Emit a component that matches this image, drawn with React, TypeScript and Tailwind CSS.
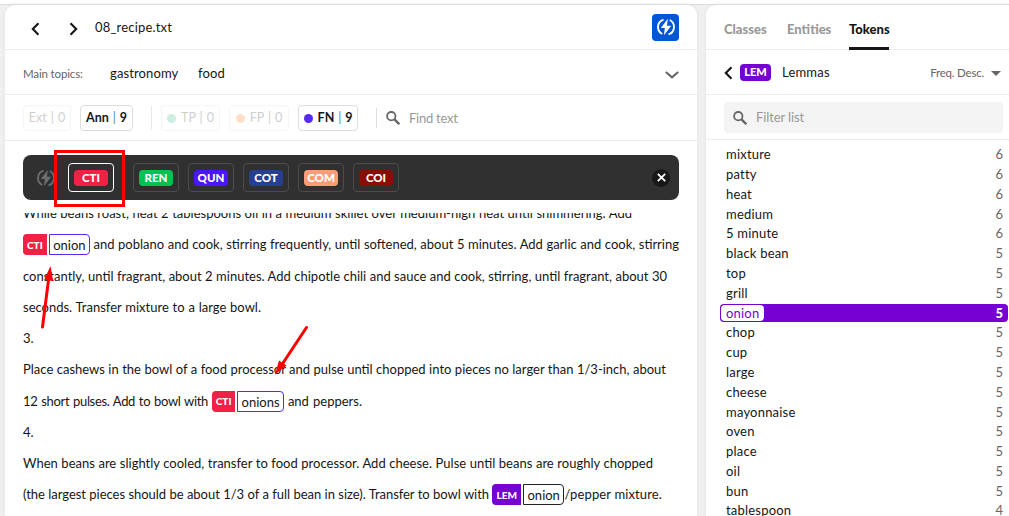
import type { ReactNode } from 'react';

const Search = ({ className }: { className: string }) => (
  <svg viewBox="0 0 14 14" className={className} fill="none" stroke="#666">
    <circle cx="5.3" cy="5.2" r="4.2" strokeWidth="1.8" />
    <path d="M8.5 8.4L13.3 13.2" strokeWidth="2.3" />
  </svg>
);

const Chevron = ({ d, className }: { d: string; className: string }) => (
  <svg viewBox="0 0 14 14" className={className} fill="none" strokeWidth="2.1">
    <path d={d} />
  </svg>
);

const Bolt = ({ className }: { className: string }) => (
  <svg viewBox="0 0 18 18" className={className} fill="none" stroke="currentColor">
    <path d="M6.500 1.600A7.800 7.800 0 0 0 5.300 16" strokeWidth="1.9" />
    <path d="M11.500 16.400A7.800 7.800 0 0 0 12.700 2" strokeWidth="1.9" />
    <path d="M10.800.8L3.800 10h4L7 17.200l7.200-9.400h-4.200z" fill="currentColor" stroke="none" />
  </svg>
);

function Chip({ label, count, dot, active, className }: { label: string; count: number; dot?: string; active?: boolean; className: string }) {
  return (
    <div
      className={`flex h-[26px] items-center justify-center rounded border pt-px text-[12.5px] ${
        active ? 'border-[#dedede] font-bold text-[#161616]' : 'border-[#f5f5f5] text-[#cfcfcf]'
      } ${className}`}
    >
      {dot && <span className={`mr-[5px] size-[9px] shrink-0 rounded-full ${dot}`} />}
      <span className="whitespace-pre [word-spacing:0.8px]">
        {label} <span className={active ? 'font-normal text-[#4b8fa5]' : ''}>|</span> {count}
      </span>
    </div>
  );
}

const classes = [
  { name: 'CTI', color: 'bg-[#f02145]', border: 'border-white' },
  { name: 'REN', color: 'bg-[#00c251]', border: 'border-[#4c4c4c]' },
  { name: 'QUN', color: 'bg-[#4a16ff]', border: 'border-[#4c4c4c]' },
  { name: 'COT', color: 'bg-[#263f91]', border: 'border-[#4c4c4c]' },
  { name: 'COM', color: 'bg-[#ff9c78]', border: 'border-[#4c4c4c]' },
  { name: 'COI', color: 'bg-[#8b0c04]', border: 'border-[#4c4c4c]' },
];

function Tag({ code, word, color, border, w }: { code: string; word: string; color: string; border: string; w: string }) {
  return (
    <span className={`mt-[5px] inline-flex h-[21px] items-stretch gap-0.5 align-top leading-[18px] tracking-normal [text-align-last:auto] ${w}`}>
      <span className={`flex shrink-0 items-center justify-center rounded-l px-1 text-[10px] font-black text-white ${color}`}>{code}</span>
      <span className={`flex flex-1 items-center justify-center rounded-r border pt-px ${border}`}>{word}</span>
    </span>
  );
}

const Line = ({ className, children }: { className: string; children: ReactNode }) => (
  <div className={`h-[31.25px] whitespace-nowrap leading-[31.25px] [text-align-last:justify] ${className}`}>{children}</div>
);

const lemmas: [string, number][] = [
  ['mixture', 6], ['patty', 6], ['heat', 6], ['medium', 6], ['5 minute', 6], ['black bean', 5], ['top', 5],
  ['grill', 5], ['onion', 5], ['chop', 5], ['cup', 5], ['large', 5], ['cheese', 5], ['mayonnaise', 5],
  ['oven', 5], ['place', 5], ['oil', 5], ['bun', 5], ['tablespoon', 4],
];

function Document() {
  return (
    <main className="flex w-[692px] flex-col overflow-hidden rounded-t-[10px] bg-white shadow-[0_0_4px_#e2e2e2]">
      <div className="flex h-[45px] shrink-0 items-center border-b border-[#ececec] pl-[24px] pr-[18px]">
        <Chevron d="M9.5 1.2L3.8 7l5.7 5.8" className="mt-[3px] size-[14px] stroke-[#161616]" />
        <Chevron d="M4.5 1.2L10.2 7l-5.7 5.8" className="mt-[3px] ml-[23px] size-[14px] stroke-[#161616]" />
        <span className="ml-[15px] pt-0.5 text-[13px] tracking-[0.18px]">08_recipe.txt</span>
        <div className="ml-auto flex size-[27px] items-center justify-center rounded bg-[#0056d6] text-white">
          <Bolt className="size-[18px]" />
        </div>
      </div>
      <div className="flex h-[45px] shrink-0 items-center border-b border-[#ececec] pt-1 pl-[18px] pr-[18px]">
        <span className="w-[87px] text-[11.5px] tracking-[-0.15px] text-[#666]">Main topics:</span>
        <span className="w-[88px] text-[13px] tracking-[0.12px]">gastronomy</span>
        <span className="text-[13px] tracking-[0.12px]">food</span>
        <Chevron d="M.8 5l6.2 5.4L13.2 5" className="ml-auto size-[14px] stroke-[#666]" />
      </div>
      <div className="flex h-[46px] shrink-0 items-center border-b border-[#ececec] pt-px pl-[18px]">
        <Chip label="Ext" count={0} className="w-[48px]" />
        <Chip label="Ann" count={9} active className="ml-[9px] w-[53px]" />
        <span className="ml-[18px] h-[24px] w-px bg-[#e8e8e8]" />
        <Chip label="TP" count={0} dot="bg-[#cdeee0]" className="ml-[9px] w-[59px]" />
        <Chip label="FP" count={0} dot="bg-[#ffdfca]" className="ml-[9px] w-[60px]" />
        <Chip label="FN" count={9} dot="bg-[#5629ff]" active className="ml-[9px] w-[60px]" />
        <span className="ml-[18px] h-[20px] w-px bg-[#e0e0e0]" />
        <Search className="ml-[9px] size-[14px]" />
        <span className="ml-[9px] pt-px text-[13px] tracking-[-0.25px] text-[#999]">Find text</span>
      </div>

      <div className="mx-[18px] mt-[14px] flex h-[45px] shrink-0 items-center rounded-lg bg-[#303030] pl-[14px] pr-[9px]">
        <Bolt className="size-[18px] text-[#6c6c6c]" />
        <div className="ml-[13px] flex gap-[9px]">
          {classes.map((c, i) => (
            <div key={c.name} className={`flex h-[29px] w-[46px] items-center justify-center rounded border ${c.border} ${i === 0 ? 'mr-[10px]' : ''}`}>
              <span className={`flex h-[16px] w-[34px] items-center justify-center rounded text-[11.5px] font-black text-white ${c.color}`}>{c.name}</span>
            </div>
          ))}
        </div>
        <div className="ml-auto flex size-[18px] items-center justify-center rounded-full bg-[#181818]">
          <svg viewBox="0 0 9 9" className="size-[9px]" stroke="white" strokeWidth="1.8">
            <path d="M.8.8l7.4 7.4M8.2.8L.8 8.2" />
          </svg>
        </div>
      </div>

      <div className="mt-[13px] min-h-0 flex-1 overflow-hidden pl-[18px]">
        <div className="-mt-[15px] text-[13px]">
          <Line className="w-[609px] tracking-[0.01px]">While beans roast, heat 2 tablespoons oil in a medium skillet over medium-high heat until shimmering. Add</Line>
          <Line className="w-[656px]">
            <Tag code="CTI" word="onion" color="bg-[#f02145]" border="border-[#5629ff]" w="w-[67px]" /> and poblano and cook, stirring frequently, until softened, about 5 minutes. Add garlic and cook, stirring
          </Line>
          <Line className="w-[644px]">constantly, until fragrant, about 2 minutes. Add chipotle chili and sauce and cook, stirring, until fragrant, about 30</Line>
          <Line className="w-[238px]">seconds. Transfer mixture to a large bowl.</Line>
          <Line className="w-[10px]">3.</Line>
          <Line className="w-[643px]">Place cashews in the bowl of a food processor and pulse until chopped into pieces no larger than 1/3-inch, about</Line>
          <Line className="w-[339px]">
            <span className="tracking-[-0.33px]">12 short pulses. Add to bowl with </span>
            <Tag code="CTI" word="onions" color="bg-[#f02145]" border="border-[#5629ff]" w="w-[72px]" /> and peppers.
          </Line>
          <Line className="w-[10px]">4.</Line>
          <Line className="w-[630px]">When beans are slightly cooled, transfer to food processor. Add cheese. Pulse until beans are roughly chopped</Line>
          <Line className="w-[639px]">
            <span className="tracking-[-0.04px]">(the largest pieces should be about 1/3 of a full bean in size). Transfer to bowl with </span>
            <Tag code="LEM" word="onion" color="bg-[#7500d1]" border="border-[#222]" w="w-[72px]" />
            <span className="tracking-[0.12px]">/pepper mixture.</span>
          </Line>
        </div>
      </div>
    </main>
  );
}

function Sidebar() {
  return (
    <aside className="flex w-[303px] flex-col overflow-hidden rounded-tl-[10px] bg-white shadow-[0_0_4px_#e2e2e2]">
      <nav className="flex h-[45px] shrink-0 gap-[18px] border-b border-[#ececec] pl-[18px] text-[13px] font-black leading-[48px] text-[#999]">
        <span className="w-[45px]">Classes</span>
        <span className="w-[44px]">Entities</span>
        <span className="h-[45px] w-[40px] border-b-3 border-[#161616] text-[#161616]">Tokens</span>
      </nav>
      <div className="flex h-[45px] shrink-0 items-center border-b border-[#ececec] pt-px pl-[16px] pr-[8px]">
        <Chevron d="M9.5 1.2L3.8 7l5.7 5.8" className="size-[14px] stroke-[#161616]" />
        <span className="ml-[4px] flex h-[17px] w-[31px] items-center justify-center rounded bg-[#7500d1] text-[11px] font-black text-white">LEM</span>
        <span className="ml-[11px] pt-px text-[13px] tracking-[0.2px]">Lemmas</span>
        <span className="ml-auto pt-px text-[11.5px] tracking-[-0.2px] text-[#666]">Freq. Desc.</span>
        <svg viewBox="0 0 10 5" className="mt-0.5 ml-[7px] h-[5px] w-[10px]" fill="#666"><path d="M0 0h10L5 5z" /></svg>
      </div>
      <div className="h-[45px] shrink-0 border-b border-[#ececec] px-[18px] pt-[7px]">
        <div className="flex h-[31px] w-[279px] items-center rounded bg-[#f4f4f4] pl-[9px]">
          <Search className="size-[14px]" />
          <span className="ml-[9px] pt-px text-[13px] tracking-[-0.1px] text-[#999]">Filter list</span>
        </div>
      </div>
      <ul className="shrink-0 pt-[5px] pl-[14px] text-[13px]">
        {lemmas.map(([word, count]) => {
          const selected = word === 'onion';
          return (
            <li key={word} className="flex h-[19.8px] items-center">
              <div className={`flex h-[18px] w-[288px] items-center justify-between rounded pr-[5px] ${selected ? 'bg-[#7500d1] font-black text-white' : 'text-[#666]'}`}>
                <span className={`ml-px flex h-[16px] items-center rounded px-[5px] font-normal tracking-[0.2px] ${selected ? 'bg-white text-[#7500d1]' : 'text-[#161616]'}`}>{word}</span>
                <span>{count}</span>
              </div>
            </li>
          );
        })}
      </ul>
    </aside>
  );
}

export default function App() {
  return (
    <div className="relative flex h-[516px] w-[1009px] flex-col overflow-hidden bg-[#f0f0f0] font-['Lato',sans-serif] text-[#161616]">
      <div className="h-[5px] shrink-0 border-b border-[#d9d9de] bg-white" />
      <div className="flex min-h-0 flex-1 gap-[9px] pl-[5px]">
        <Document />
        <Sidebar />
      </div>
      <svg className="pointer-events-none absolute inset-0" width="1009" height="516" fill="none" stroke="#f00" strokeWidth="3">
        <rect x="55.5" y="151.5" width="68" height="54" />
        <path d="M42.5 327L49 276M306.5 327.5L281 366" strokeLinecap="round" />
        <path d="M50.5 266l2.700 15-9-1.200zM275 374.500l4-14 7.500 5z" fill="#f00" stroke="none" />
      </svg>
    </div>
  );
}
